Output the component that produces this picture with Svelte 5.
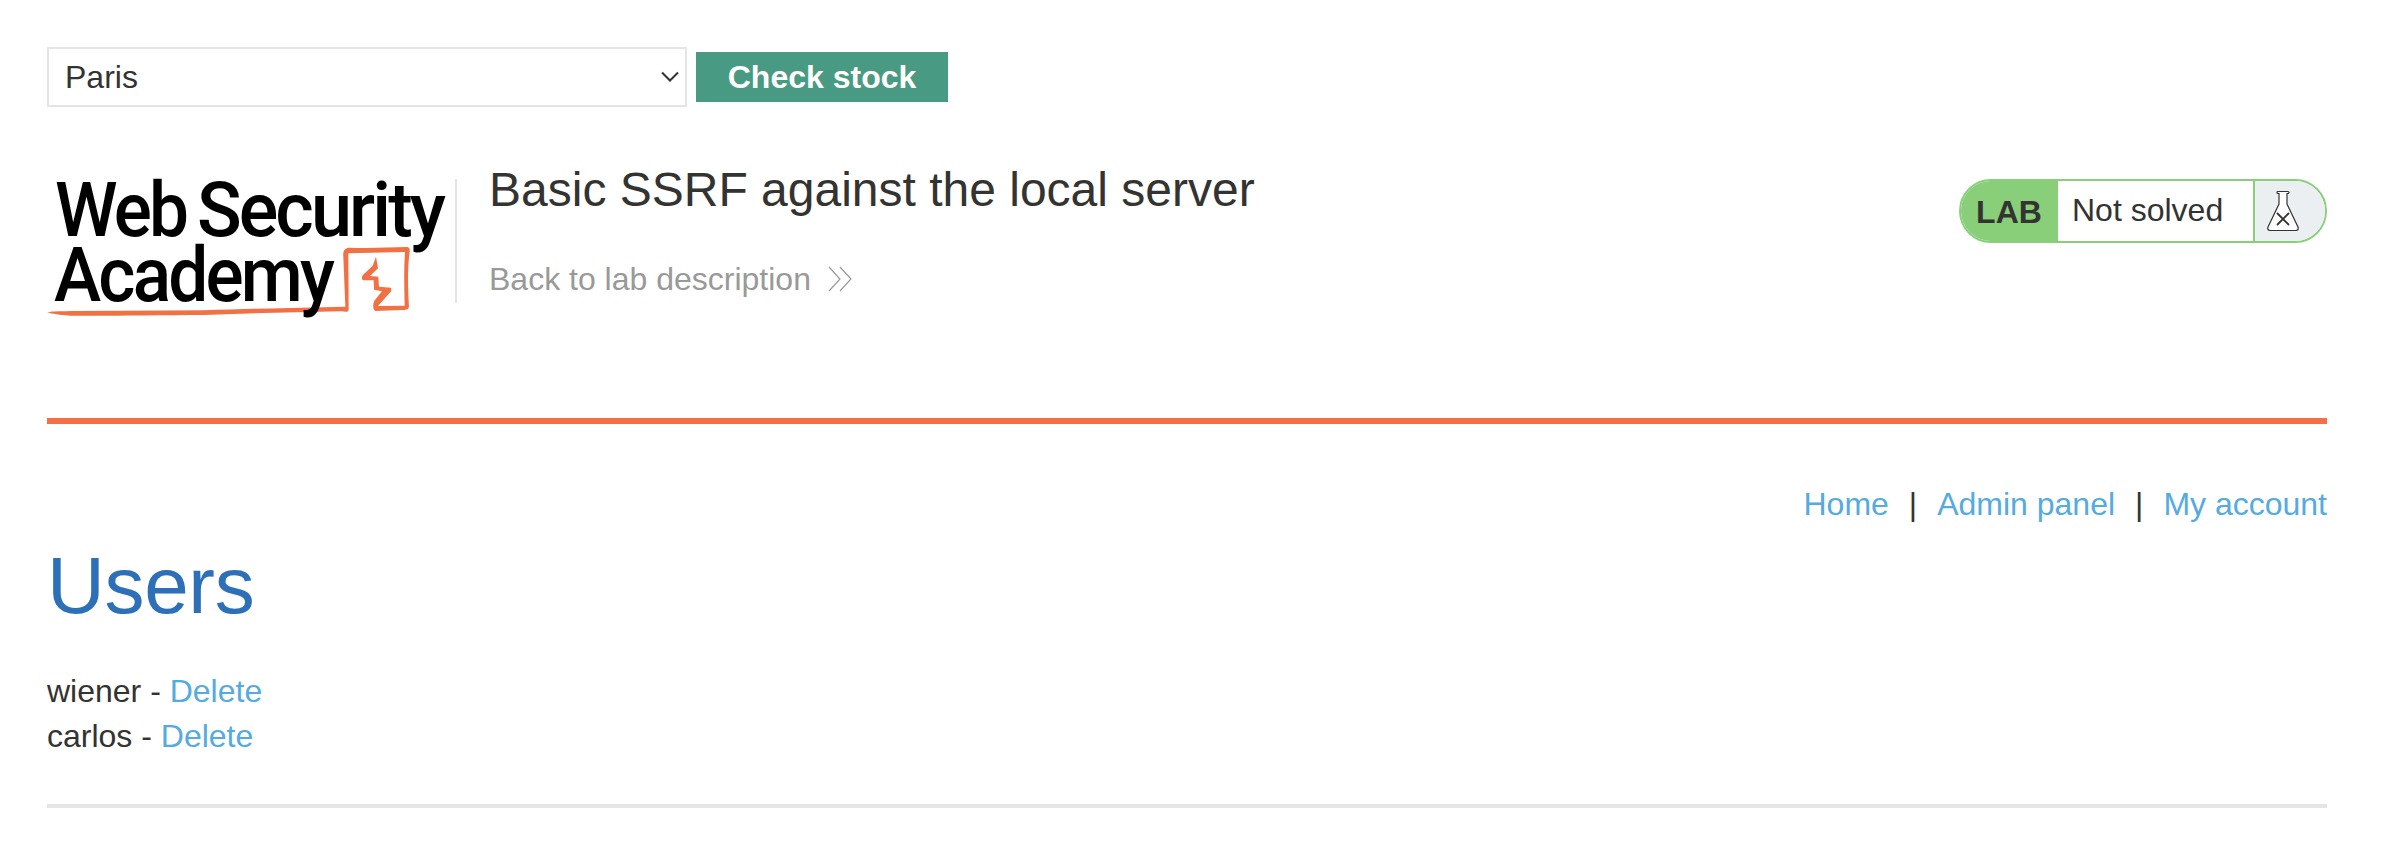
<script>
  const users = ['wiener', 'carlos'];
  const links = ['Home', 'Admin panel', 'My account'];
</script>

<main>
  <form class="stock" onsubmit={(e) => e.preventDefault()}>
    <div class="select">
      <span>Paris</span>
      <svg width="18" height="12" viewBox="0 0 18 12"><path d="M1 1.5 9 9.5 17 1.5" fill="none" stroke="#333332" stroke-width="2" /></svg>
    </div>
    <button>Check stock</button>
  </form>

  <header>
    <svg class="logo" width="404" height="145" viewBox="17 16 404 145">
      <g fill="#f17144" transform="scale(.33333)">
        <path d="M52 457 C70 453 92 454 140 453 L520 451 C620 447 700 446 780 444 L946 440 L940 290 C938 272 944 263 960 263 C1020 265 1080 262 1132 261 C1141 264 1140 272 1138 282 C1132 335 1134 390 1137 440 C1134 450 1128 449 1115 450 L1036 453 C1027 449 1029 430 1033 422 L1056 394 L1032 389 L1031 361 L999 361 C993 355 996 348 1001 343 L1028 317 L1038 290 L1044 325 L1020 348 L1045 350 L1047 380 L1083 383 L1084 393 L1044 438 L1124 437 C1123 390 1121 330 1125 276 L955 280 L956 450 C953 458 945 455 935 454 L700 459 L520 465 C370 465 220 469 120 467 C90 465 65 462 52 457Z" />
      </g>
      <g class="lettering">
        <text x="25" y="76" textLength="131" lengthAdjust="spacingAndGlyphs">Web</text>
        <text x="167" y="76" textLength="246" lengthAdjust="spacingAndGlyphs">Security</text>
        <text x="24" y="141" textLength="278" lengthAdjust="spacingAndGlyphs">Academy</text>
      </g>
    </svg>
    <div class="title">
      <h2>Basic SSRF against the local server</h2>
      <a class="back" href="#top">Back to lab description
        <svg width="24" height="26" viewBox="0 0 24 26"><path d="M1 1 12 13 1 25M12 1 23 13 12 25" fill="none" stroke="#999" stroke-width="1.2" /></svg>
      </a>
    </div>
    <div class="status">
      <strong>LAB</strong>
      <span>Not solved</span>
      <div class="flask">
        <svg width="34" height="42" viewBox="0 0 34 42">
          <path d="M12 1.5h10q1 0 1 1t-1 1h-1V14l11 23q1 3-2 3.500H4q-3-.5-2-3.500L13 14V3.500h-1q-1 0-1-1t1-1Z" fill="#fff" stroke="#333332" stroke-width="1.200" />
          <path d="m11 23 12 12m0-12-12 12" stroke="#333332" stroke-width="1.800" />
        </svg>
      </div>
    </div>
  </header>

  <nav>
    {#each links as link, i}
      {#if i}<span>|</span>{/if}<a href="#top">{link}</a>
    {/each}
  </nav>
  <h1>Users</h1>
  <section>
    {#each users as user}
      <div>{user} - <a href="#top">Delete</a></div>
    {/each}
  </section>
  <hr />
</main>

<style>
  :global(body) { background: #fff; }
  main {
    box-sizing: border-box;
    height: 844px;
    padding: 47px 77px 0 47px;
    overflow: hidden;
    font: 32px/45px "Liberation Sans", Arial, sans-serif;
    color: #333332;
  }
  .stock { display: flex; align-items: center; gap: 9px; height: 60px; }
  .select {
    box-sizing: border-box;
    width: 640px;
    height: 60px;
    padding: 0 6px 0 16px;
    border: 2px solid #e5e5e5;
    display: flex;
    align-items: center;
    justify-content: space-between;
  }
  button {
    height: 50px;
    width: 252px;
    padding: 0;
    border: 0;
    background: #499a83;
    color: #fff;
    font: bold 32px/50px "Liberation Sans", Arial, sans-serif;
  }
  header { display: flex; height: 311px; border-bottom: 6px solid #f17144; }
  .logo { margin-top: 69px; flex: none; overflow: visible; }
  .lettering { font: 500 75.5px Roboto, sans-serif; letter-spacing: -3px; fill: #000; }
  .title {
    height: 124px;
    margin: 72px 0 0 4px;
    padding-left: 32px;
    border-left: 2px solid #e5e5e5;
  }
  h2 { margin: -16px 0 0; font-size: 48px; font-weight: 400; line-height: 54px; }
  .back { display: flex; align-items: center; gap: 17px; margin-top: 40px; color: #999; }
  .back svg { margin-top: -1px; }
  a { color: #55abdf; text-decoration: none; }
  .status {
    box-sizing: border-box;
    display: flex;
    width: 368px;
    height: 64px;
    margin: 72px 0 0 auto;
    border: 2px solid #89cf7a;
    border-radius: 32px;
    overflow: hidden;
    line-height: 60px;
  }
  strong { width: 96px; padding-right: 1px; background: #89cf7a; text-align: center; line-height: 62px; }
  .status span { width: 181px; padding-left: 14px; line-height: 58px; }
  .flask { display: flex; align-items: center; flex: 1; padding-left: 11px; border-left: 2px solid #89cf7a; background: #ebeff2; }
  nav { display: flex; justify-content: flex-end; gap: 20px; margin-top: 58px; }
  h1 { margin: 13px 0 0; font-size: 80px; font-weight: 400; line-height: 92px; letter-spacing: -.3px; color: #2d70b7; }
  section { margin-top: 37px; }
  hr { height: 4px; margin: 45px 0 0; border: 0; background: #e5e5e5; }
</style>
